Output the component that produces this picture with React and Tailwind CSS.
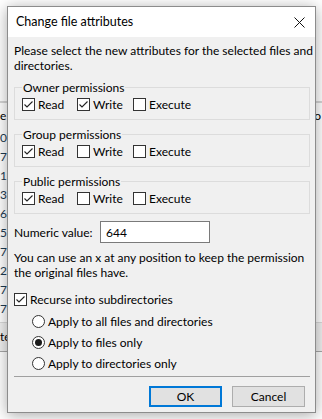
import React from "react";

const font = { fontFamily: '"Segoe UI", Lato, "Noto Sans", sans-serif' };

function CheckBox({ checked }) {
  return (
    <span className="w-[13px] h-[13px] border border-[#333333] bg-white flex items-center justify-center shrink-0">
      {checked && (
        <svg width="11" height="11" viewBox="0 0 11 11">
          <path d="M1.5 5.5 L4 8 L9.5 2.5" fill="none" stroke="#222" strokeWidth="1.1" />
        </svg>
      )}
    </span>
  );
}

function Check({ label, checked, width }) {
  return (
    <div className={`flex items-center gap-[3px] h-[15px] ${width}`}>
      <CheckBox checked={checked} />
      <span>{label}</span>
    </div>
  );
}

function Radio({ label, checked }) {
  return (
    <div className="flex items-center gap-[3px] h-[15px]">
      <span className="w-[13px] h-[13px] rounded-full border border-[#333333] bg-white flex items-center justify-center shrink-0">
        {checked && <span className="w-[7px] h-[7px] rounded-full bg-[#1a1a1a]"></span>}
      </span>
      <span>{label}</span>
    </div>
  );
}

function Group({ title, perms }) {
  return (
    <fieldset className="border border-[#dcdcdc] px-[7px] pb-[7px] mt-[7px]">
      <legend className="px-px leading-[15px]">{title}</legend>
      <div className="flex items-center mt-[2px]">
        <Check label="Read" checked={perms[0]} width="w-[55px]" />
        <Check label="Write" checked={perms[1]} width="w-[56px]" />
        <Check label="Execute" checked={perms[2]} width="" />
      </div>
    </fieldset>
  );
}

export default function App() {
  const digits = ["0", "7", "1", "3", "6", "5", "7", "2", "7", "7"];

  return (
    <div className="relative w-[322px] h-[419px] bg-white overflow-hidden text-[12px] text-black" style={font}>
      {/* background file list */}
      <div className="h-[101px]"></div>
      <div className="h-[2px] bg-[#d5d5d5]"></div>
      <div className="h-[25px] flex items-center justify-between pr-[1px]">
        <span>e</span>
        <span>o</span>
      </div>
      {digits.map((d, i) => (
        <div key={i} className="h-[19px] flex items-center text-[#1d3b52]">
          <span>{d}</span>
        </div>
      ))}
      <div className="h-[4px]"></div>
      <div className="h-[29px] bg-[#f0f0f0] border-t border-[#dadada] flex items-center">
        <span>te</span>
      </div>
      <div className="h-[1px] bg-[#a8a8a8]"></div>

      {/* dialog */}
      <div className="absolute left-[7px] top-[6px] w-[309px] border border-[#8c8c8c] bg-white shadow-[0_2px_14px_rgba(0,0,0,0.35)] flex flex-col">
        <div className="h-[30px] flex items-center justify-between pl-[8px] pr-[10px] text-[12.5px]">
          <span>Change file attributes</span>
          <svg width="11" height="11" viewBox="0 0 11 11">
            <path d="M0.5 0.5 L10.5 10.5 M10.5 0.5 L0.5 10.5" stroke="#111" strokeWidth="1" />
          </svg>
        </div>
        <div className="bg-[#f0f0f0] pl-[6px] pr-[5px] pt-[6px] pb-[5px] flex flex-col leading-[15px]">
          <p className="whitespace-nowrap">
            Please select the new attributes for the selected files and
            <br />
            directories.
          </p>

          <Group title="Owner permissions" perms={[true, true, false]} />
          <Group title="Group permissions" perms={[true, false, false]} />
          <Group title="Public permissions" perms={[true, false, false]} />

          <div className="flex items-center h-[22px] mt-[7px]">
            <span className="w-[86px]">Numeric value:</span>
            <div className="w-[110px] h-[22px] border border-[#7a7a7a] bg-white flex items-center pl-[5px]">644</div>
          </div>

          <p className="mt-[7px] whitespace-nowrap">
            You can use an x at any position to keep the permission
            <br />
            the original files have.
          </p>

          <div className="mt-[12px]">
            <Check label="Recurse into subdirectories" checked width="" />
          </div>

          <div className="flex flex-col gap-[6px] pl-[18px] mt-[7px]">
            <Radio label="Apply to all files and directories" />
            <Radio label="Apply to files only" checked />
            <Radio label="Apply to directories only" />
          </div>

          <div className="h-px bg-[#a0a0a0] mt-[5px]"></div>

          <div className="flex justify-end gap-[10px] pr-[5px] mt-[9px]">
            <button className="w-[73px] h-[21px] border-2 border-[#0078d7] bg-[#e1e1e1] flex items-center justify-center">OK</button>
            <button className="w-[73px] h-[21px] border border-[#adadad] bg-[#e1e1e1] flex items-center justify-center">Cancel</button>
          </div>
        </div>
      </div>
    </div>
  );
}
